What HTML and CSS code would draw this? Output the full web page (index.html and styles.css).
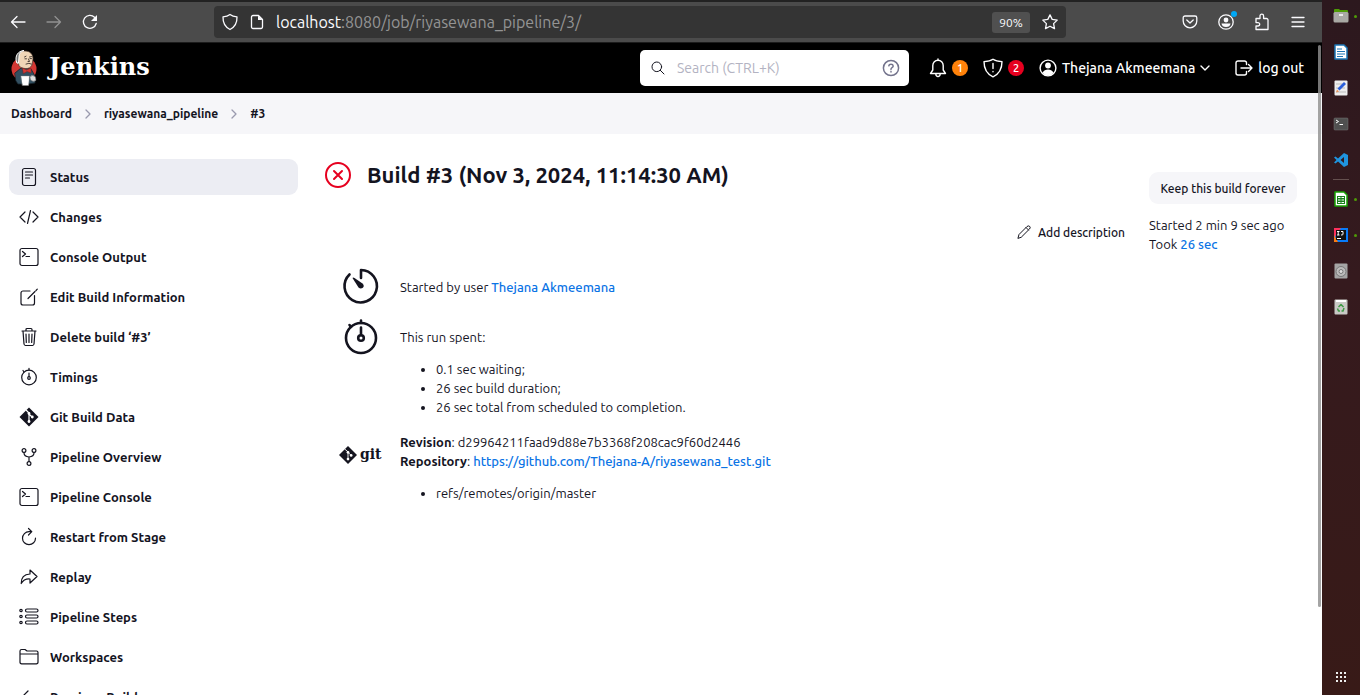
FILE: index.html
```html
<!DOCTYPE html>
<html lang="en">
<head>
<meta charset="utf-8">
<title>riyasewana_pipeline #3 [Jenkins]</title>
<link rel="stylesheet" href="styles.css">
</head>
<body>
<div class="desktop">
<div class="browser">
  <div class="toolbar">
    <div class="nav-buttons">
      <button class="tool" aria-label="Back"><svg width="16" height="16" viewBox="0 0 16 16"><path d="M15 8H1.500M7 2.500L1.500 8L7 13.500"/></svg></button>
      <button class="tool dim" aria-label="Forward"><svg width="16" height="16" viewBox="0 0 16 16"><path d="M1 8H14.500M9 2.500L14.500 8L9 13.500"/></svg></button>
      <button class="tool" aria-label="Reload"><svg width="16" height="16" viewBox="0 0 16 16"><path d="M14.200 9.500A6.500 6.500 0 1 1 12.500 3.200"/><path class="solid" d="M15 1v6H9z"/></svg></button>
    </div>
    <div class="urlbar">
      <svg class="tool-icon" width="16" height="18" viewBox="0 0 16 18"><path d="M8 1.500C10 3 12.500 3.600 15 3.800C15.200 9.500 13.500 13.800 8 16.500C2.500 13.800 .800 9.500 1 3.800C3.500 3.600 6 3 8 1.500Z"/></svg>
      <svg class="tool-icon" width="14" height="16" viewBox="0 0 14 16"><path d="M3 1.500H8.500L12.500 5.500V13A1.500 1.500 0 0 1 11 14.500H3A1.500 1.500 0 0 1 1.500 13V3A1.500 1.500 0 0 1 3 1.500Z"/><path class="solid" d="M8 1.500L12.500 6H8z"/></svg>
      <span class="url"><b>localhost</b>:8080/job/riyasewana_pipeline/3/</span>
      <button class="zoom">90%</button>
      <button class="tool" aria-label="Bookmark"><svg width="16" height="16" viewBox="0 0 16 16"><path d="M8 .900L10.200 5.400L15.200 6.100L11.600 9.600L12.500 14.600L8 12.200L3.500 14.600L4.400 9.600L.800 6.100L5.800 5.400Z"/></svg></button>
    </div>
    <div class="ext-buttons">
      <button class="tool" aria-label="Pocket"><svg width="16" height="16" viewBox="0 0 16 16"><path d="M3 2H13A1.800 1.800 0 0 1 14.800 3.800V7A6.800 6.800 0 0 1 1.200 7V3.800A1.800 1.800 0 0 1 3 2ZM4.800 6L8 9L11.200 6"/></svg></button>
      <button class="tool account" aria-label="Account"><svg width="16" height="16" viewBox="0 0 16 16"><circle cx="8" cy="8" r="7.200"/><circle class="solid" cx="8" cy="6" r="2.400"/><path class="solid" d="M3.500 9.500H12.500Q12 13 8 13Q4 13 3.500 9.500Z"/></svg></button>
      <button class="tool" aria-label="Extensions"><svg width="16" height="18" viewBox="0 0 16 18"><path d="M2 5.500H6V3A1.800 1.800 0 0 1 9.600 3V5.500H12.500A1.500 1.500 0 0 1 14 7V16.500H2V13H4A1.700 1.700 0 0 0 4 9.600H2Z"/></svg></button>
      <button class="tool" aria-label="Menu"><svg width="14" height="14" viewBox="0 0 14 14"><path d="M1 2.500H13M1 7H13M1 11.500H13"/></svg></button>
    </div>
  </div>

  <header class="page-header">
    <a class="brand" href="#">
      <svg width="28" height="38" viewBox="0 0 28 38"><ellipse cx="14" cy="20" rx="12.500" ry="12"/><path d="M5 24L11 19L21 20L25 27L25 34L18 35H8L6 32Z" fill="#335061" stroke="#17242d" stroke-width=".800"/><path d="M7 10C7 4 11 1.500 15 2C20 2 23 5 23 10L22 16Q20 20 15 19.500Q9 19 8.500 15Q6 14 7 10Z" fill="#f0d6b7" stroke="#4a3a30" stroke-width=".700"/><path d="M6.500 13C4.500 7 8 2 14 1.500C10 3 9 5 9 8L8.500 14Q6.500 15 6.500 13Z" fill="#727472"/><path d="M14.500 8L16 7.200M19.500 8L21.500 7.600M15 9.800H16.500M20 9.600H21.500M18.500 10L19.500 12.500H18M16 15Q19 13.500 21.500 15" fill="none" stroke="#3a302b" stroke-width=".900"/><path d="M12.500 19L16.500 21L21 19L21 24L17 22.500L13.500 24.500Z" fill="#d33833" stroke="#81201e" stroke-width=".500"/><path d="M11 27H19.500L18.500 36.500H12.500Z" fill="#fff" stroke="#888" stroke-width=".400"/><path d="M20 27.500Q23 25 25.500 28L26 31.500Q23 33.500 20.500 31Z" fill="#ddd" stroke="#555" stroke-width=".500"/></svg>
      <span>Jenkins</span>
    </a>
    <div class="search">
      <svg width="14" height="14" viewBox="0 0 14 14"><circle cx="5.800" cy="5.800" r="4.800"/><path d="M9.300 9.300L13 13"/></svg>
      <input type="text" aria-label="Search" placeholder="Search (CTRL+K)">
      <button aria-label="Search help"><svg width="18" height="18" viewBox="0 0 18 18"><circle cx="9" cy="9" r="7.600"/><path d="M6.800 6.800Q7 5.200 9 5.200T11.200 7Q11.200 8 10 8.700T9 10.500M9 12.600V13"/></svg></button>
    </div>
    <div class="header-links">
      <button class="alert" aria-label="1 notification"><svg width="18" height="20" viewBox="0 0 18 20"><path d="M1.500 15.500L3.800 12V7.500A5.200 5.200 0 0 1 14.200 7.500V12L16.500 15.500ZM6.800 16Q7 18.500 9 18.500T11.200 16M9 2V1"/></svg><span class="badge orange">1</span></button>
      <button class="alert" aria-label="2 security warnings"><svg width="20" height="20" viewBox="0 0 20 20"><path d="M10 1.200C12.500 3 15.500 3.500 19 3.600C19 11 16.500 16 10 18.800C3.500 16 1 11 1 3.600C4.500 3.500 7.500 3 10 1.200ZM10 5.500V10.500M10 13.500V13.800"/></svg><span class="badge red">2</span></button>
      <button class="header-link"><svg width="18" height="18" viewBox="0 0 18 18"><circle cx="9" cy="9" r="7.900"/><circle class="fill" cx="9" cy="6.500" r="2.900"/><path class="fill" d="M3.500 13.500Q5.500 10.500 9 10.500T14.500 13.500Q12.500 16.500 9 16.500T3.500 13.500Z"/></svg>Thejana Akmeemana<svg width="10" height="8" viewBox="0 0 10 8"><path d="M1 2L5 6L9 2"/></svg></button>
      <a class="header-link" href="#"><svg width="18" height="16" viewBox="0 0 18 16"><path d="M11.500 4.500V3A2 2 0 0 0 9.500 1H3A2 2 0 0 0 1 3V13A2 2 0 0 0 3 15H9.500A2 2 0 0 0 11.500 13V11.500M6 8H17M13.500 4.500L17 8L13.500 11.500"/></svg>log out</a>
    </div>
  </header>

  <nav class="breadcrumbs" aria-label="Breadcrumbs">
    <a href="#">Dashboard</a>
    <svg width="8" height="10" viewBox="0 0 8 10"><path d="M2 1L6 5L2 9"/></svg>
    <a href="#">riyasewana_pipeline</a>
    <svg width="8" height="10" viewBox="0 0 8 10"><path d="M2 1L6 5L2 9"/></svg>
    <a href="#">#3</a>
  </nav>

  <div class="page-body">
    <nav class="tasks" aria-label="Build tasks">
      <a class="task active" href="#"><svg viewBox="0 0 20 20"><rect x="3.500" y="1.500" width="13" height="17" rx="2"/><path d="M6.500 5H13.500M6.500 8H13.500M6.500 11H10.500"/></svg>Status</a>
      <a class="task" href="#"><svg viewBox="0 0 20 20"><path d="M6 5L1 10L6 15M14 5L19 10L14 15M11.500 3.500L8.500 16.500"/></svg>Changes</a>
      <a class="task" href="#"><svg viewBox="0 0 20 20"><rect x="1" y="1.500" width="18" height="17" rx="2"/><path d="M3.500 4.500L6.500 7L3.500 9.500M7 9.500H10.500"/></svg>Console Output</a>
      <a class="task" href="#"><svg viewBox="0 0 20 20"><path d="M11 4H4A2 2 0 0 0 2 6V16A2 2 0 0 0 4 18H13.500A2 2 0 0 0 15.500 16V8.500M9 11.500L16 4.500M17 3.500L18.300 2.200"/></svg>Edit Build Information</a>
      <a class="task" href="#"><svg viewBox="0 0 20 20"><path d="M4 4L5 17A1.800 1.800 0 0 0 6.500 18.500H13.500A1.800 1.800 0 0 0 15 17L16 4M3 4H17M7 4V2.500A1 1 0 0 1 8 1.500H12A1 1 0 0 1 13 2.500V4M10 7V15.500M7 7L7.300 15.500M13 7L12.700 15.500"/></svg>Delete build ‘#3’</a>
      <a class="task" href="#"><svg viewBox="0 0 20 20"><circle cx="10" cy="10.500" r="7.300"/><circle cx="10" cy="11" r="1.300"/><path d="M10 9.500V6M10 1.300V3M4 3.500L5 5"/></svg>Timings</a>
      <a class="task" href="#"><svg viewBox="0 0 20 20"><path class="ink" d="M10 .500L19.500 10L10 19.500L.500 10Z"/><path class="paper" d="M7.500 3.500L10 6V15M10 7L13 10"/><circle class="dot" cx="10" cy="6.500" r="1.400"/><circle class="dot" cx="10" cy="14.500" r="1.400"/><circle class="dot" cx="13.300" cy="10" r="1.400"/></svg>Git Build Data</a>
      <a class="task" href="#"><svg viewBox="0 0 20 20"><circle cx="5" cy="3.500" r="1.900"/><circle cx="15" cy="3.500" r="1.900"/><circle cx="10" cy="16.500" r="1.900"/><path d="M5 5.500V6Q5 9.500 10 10Q15 9.500 15 6V5.500M10 10V14.500"/></svg>Pipeline Overview</a>
      <a class="task" href="#"><svg viewBox="0 0 20 20"><rect x="1" y="1.500" width="18" height="17" rx="2"/><path d="M3.500 4.500L6.500 7L3.500 9.500M7 9.500H10.500"/></svg>Pipeline Console</a>
      <a class="task" href="#"><svg viewBox="0 0 20 20"><path d="M12.500 4.700H10A6.500 6.500 0 1 0 16.500 11.200M9.500 1.500L12.800 4.700L9.500 8"/></svg>Restart from Stage</a>
      <a class="task" href="#"><svg viewBox="0 0 20 20"><path d="M11 3L18 9.500L11 16V12Q5 11.500 2.200 16.500Q2 7.500 11 7Z"/></svg>Replay</a>
      <a class="task" href="#"><svg viewBox="0 0 20 20"><circle cx="2" cy="3.500" r="1.200"/><circle cx="2" cy="9.500" r="1.200"/><circle cx="2" cy="15.500" r="1.200"/><rect x="6.500" y="2" width="12.500" height="3" rx="1.500"/><rect x="6.500" y="8" width="12.500" height="3" rx="1.500"/><rect x="6.500" y="14" width="12.500" height="3" rx="1.500"/></svg>Pipeline Steps</a>
      <a class="task" href="#"><svg viewBox="0 0 20 20"><path d="M1 7V4A1.600 1.600 0 0 1 2.600 2.500H6L8 4H17.500A1.500 1.500 0 0 1 19 5.500V15A1.600 1.600 0 0 1 17.400 16.800H2.600A1.600 1.600 0 0 1 1 15V7H19"/></svg>Workspaces</a>
      <a class="task" href="#"><svg viewBox="0 0 20 20"><path d="M9 4L3 10L9 16M3 10H17"/></svg>Previous Build</a>
    </nav>

    <main class="build">
      <div class="build-head">
        <h1><svg width="28" height="28" viewBox="0 0 28 28"><circle cx="14" cy="14" r="12"/><path d="M10 10L18 18M18 10L10 18"/></svg>Build #3 (Nov 3, 2024, 11:14:30 AM)</h1>
        <button class="describe"><svg width="14" height="14" viewBox="0 0 14 14"><path d="M1 13L2 9.500L10 1.500Q11.500 .300 12.800 1.500Q13.800 2.600 12.500 4L4.500 12ZM9 2.500L11.500 5"/></svg>Add description</button>
        <div class="run-info">
          <button class="keep">Keep this build forever</button>
          <p>Started 2 min 9 sec ago<br>Took <a href="#">26 sec</a></p>
        </div>
      </div>

      <section class="detail">
        <svg class="big-icon" viewBox="0 0 40 40"><path d="M20 12V4A16.200 16.200 0 1 1 8.500 8.500"/><path class="ink" d="M11.500 12Q12 11 13.500 12L21.500 17.500Q24 20 21.500 22Q19.500 23 17.500 21.500Z"/></svg>
        <p class="cause">Started by user <a href="#">Thejana Akmeemana</a></p>
      </section>
      <section class="detail run-time">
        <svg class="big-icon" viewBox="0 0 40 40"><circle cx="20" cy="21" r="15"/><circle cx="20" cy="21" r="2.800"/><path d="M20 18V10.500M20 3.500V6M8.500 8L10 10"/></svg>
        <div class="spent">
          <p>This run spent:</p>
          <ul><li>0.1 sec waiting;</li><li>26 sec build duration;</li><li>26 sec total from scheduled to completion.</li></ul>
        </div>
      </section>
      <section class="detail revision">
        <div class="git-logo"><svg width="18" height="18" viewBox="0 0 20 20"><path class="ink" d="M10 0L20 10L10 20L0 10Z"/><path class="paper" d="M6.500 3.500L10 6.500V15M10 7L13 10"/><circle class="dot" cx="10" cy="7" r="1.500"/><circle class="dot" cx="10" cy="14.500" r="1.500"/><circle class="dot" cx="13.500" cy="10.500" r="1.500"/></svg><span>git</span></div>
        <div>
          <p><b>Revision</b>: d29964211faad9d88e7b3368f208cac9f60d2446<br><b>Repository</b>: <a href="#">https://github.com/Thejana-A/riyasewana_test.git</a></p>
          <ul><li>refs/remotes/origin/master</li></ul>
        </div>
      </section>
    </main>
  </div>
  <div class="scroll-thumb"></div>
</div>

<aside class="dock" aria-label="Dock">
  <button class="app running" aria-label="Files"><svg viewBox="0 0 16 16"><path d="M1 2Q1 1 2 1H6L7 2H14Q15 2 15 3V6H1Z" fill="#4e9a06"/><rect x=".500" y="4" width="15" height="10.500" rx="1.500" fill="#a9a9a4"/><path d="M6 7H10" stroke="#fff" stroke-width="1.500"/></svg></button>
  <button class="app" aria-label="Writer"><svg viewBox="0 0 16 16"><path d="M2 1H11L14 4V15H2Z" fill="#fff" stroke="#1b75b5" stroke-width="1.500"/><path d="M4 5H9M4 7.500H12M4 10H12M4 12.500H10" stroke="#1b75b5"/></svg></button>
  <button class="app" aria-label="Text editor"><svg viewBox="0 0 16 16"><rect x="1.500" y=".500" width="13" height="15" rx="1" fill="#eee"/><path d="M3 4H10M3 8H12M3 12H13" stroke="#bbb"/><path d="M5.500 9.500L12 3" stroke="#2b5fd9" stroke-width="2.800"/><path d="M3 12.500L4 9.500L6 11.500Z" fill="#e8935a"/></svg></button>
  <button class="app" aria-label="Terminal"><svg viewBox="0 0 16 16"><rect x="1" y="2" width="14" height="12" rx="1" fill="#505050" stroke="#777" stroke-width=".500"/><path d="M3 4L5.500 5.500L3 7M6.500 8.500H10" stroke="#fff" fill="none"/></svg></button>
  <button class="app" aria-label="Visual Studio Code"><svg viewBox="0 0 16 16"><path d="M11 1L15 3V13L11 15L5 9.500L2.500 11.500L1 10.500L3.500 8L1 5.500L2.500 4.500L5 6.500ZM11 5L7.500 8L11 11Z" fill="#1f94df" fill-rule="evenodd"/></svg></button>
  <hr>
  <button class="app running" aria-label="Calc"><svg viewBox="0 0 16 16"><path d="M2 1H11L14 4V15H2Z" fill="#fff" stroke="#18a303" stroke-width="1.500"/><rect x="4" y="5" width="8" height="8" fill="#18811a"/><path d="M5 6.500H7.500M8.500 6.500H11M5 9H7.500M8.500 9H11M5 11.500H7.500M8.500 11.500H11" stroke="#fff"/></svg></button>
  <button class="app running" aria-label="IntelliJ IDEA"><svg viewBox="0 0 16 16"><path d="M1 1H15V15H1Z" fill="#087cfa"/><path d="M1 1H8L1 11Z" fill="#fe315d"/><path d="M1 8L5 15H1Z" fill="#f97a12"/><rect x="3" y="3" width="10" height="10" fill="#111"/><path d="M4 4.500H6.500M5.200 4.500V8M4 8H6.500M8 4.500H10V7.500Q9.500 8 8 8M4 11.500H8" stroke="#fff" fill="none"/></svg></button>
  <button class="app" aria-label="Disks"><svg viewBox="0 0 16 16"><rect x="1.500" y=".500" width="13" height="15" rx="1" fill="#a5a5a5"/><circle cx="8" cy="8.500" r="5" fill="#bbb" stroke="#777"/><circle cx="8" cy="8.500" r="2" fill="#ddd" stroke="#777"/></svg></button>
  <button class="app" aria-label="Trash"><svg viewBox="0 0 16 16"><rect x="1.500" y=".500" width="13" height="15" rx="1" fill="#c9c9c5"/><path d="M3 2H13" stroke="#fff" stroke-width="2"/><path d="M5.500 8L8 5.500L10.500 8M11 9L10 12H8.500M7 12H5.500L4.500 9.500" fill="none" stroke="#3e9a45" stroke-width="1.500"/></svg></button>
  <button class="app apps" aria-label="Show applications"><svg viewBox="0 0 16 16"><path d="M3 4H5M7 4H9M11 4H13M3 8H5M7 8H9M11 8H13M3 12H5M7 12H9M11 12H13" stroke="#eee" stroke-width="2"/></svg></button>
</aside>
</div>
</body>
</html>
```
FILE: styles.css
```css
* { box-sizing: border-box; }
html, body { height: 100%; }
body {
  margin: 0;
  overflow: hidden;
  font-family: Ubuntu, "Noto Sans", sans-serif;
  font-size: 13px;
  line-height: 19px;
  color: #14141f;
  background: #fff;
}
a { color: #0b74e5; text-decoration: none; font-weight: 500; }
p, ul, h1 { margin: 0; }
button { padding: 0; border: 0; background: none; font: inherit; color: inherit; }
svg { flex: none; fill: none; stroke: currentColor; stroke-linecap: round; stroke-linejoin: round; }
svg .ink { fill: #14141f; stroke: none; }
svg .paper { fill: none; stroke: #fff; }
svg .dot { fill: #fff; stroke: none; }

.desktop { display: flex; height: 100%; }
.browser { position: relative; flex: 1; min-width: 0; display: flex; flex-direction: column; overflow: hidden; }

/* Browser toolbar */
.toolbar {
  flex: none;
  display: flex;
  align-items: center;
  height: 43px;
  padding: 0 16px 0 10px;
  border-top: 2px solid #222;
  border-bottom: 1px solid #1c1c1c;
  background: #4b4b4b;
  color: #fbfbfe;
}
.nav-buttons { display: flex; gap: 20px; flex: 0 1 204px; }
.tool { position: relative; display: grid; place-items: center; width: 16px; height: 18px; }
.tool svg, .tool-icon { stroke-width: 1.3; }
.tool .solid, .tool-icon .solid { fill: currentColor; stroke: none; }
.tool.dim { color: #919191; }
.urlbar {
  flex: 0 1 852px;
  display: flex;
  align-items: center;
  gap: 12px;
  height: 32px;
  padding: 0 8px;
  border-radius: 4px;
  background: #343434;
}
.url { flex: 1; font-size: 16px; color: #949494; }
.url b { font-weight: 400; color: #fbfbfe; }
.zoom { width: 38px; height: 21px; border-radius: 3px; background: #505050; font-size: 12px; }
.ext-buttons { display: flex; gap: 20px; margin-left: auto; }
.account::after {
  content: "";
  position: absolute;
  top: -2px;
  right: -3px;
  width: 6px;
  height: 6px;
  border-radius: 50%;
  background: #00a8f5;
}
.nav-buttons, .urlbar { min-width: 0; }

/* Jenkins header */
.page-header {
  flex: none;
  display: flex;
  align-items: center;
  height: 50px;
  padding: 0 18px 0 10px;
  background: #000;
  color: #fff;
}
.brand { display: flex; align-items: center; gap: 11px; color: #fff; font: bold 24px/32px Georgia, "DejaVu Serif", serif; }
.brand ellipse { fill: #d33833; stroke: none; }
.brand span { padding-bottom: 2px; }
.search {
  display: flex;
  align-items: center;
  width: 269px;
  height: 36px;
  margin-left: auto;
  padding: 0 9px 0 11px;
  border-radius: 5px;
  background: #fff;
  color: #14141f;
}
.search input {
  flex: 1;
  min-width: 0;
  margin: 0;
  padding: 0 0 0 12px;
  border: 0;
  outline: 0;
  background: none;
  font: 14px/20px Ubuntu, "Noto Sans", sans-serif;
}
.search input::placeholder { color: #b3b3c2; opacity: 1; }
.search button { display: flex; color: #73738c; }
.search button svg { stroke-width: 1.5; }
.header-links { display: flex; align-items: center; gap: 15px; margin-left: 20px; font-size: 14px; font-weight: 500; }
.alert, .header-link { display: flex; align-items: center; gap: 5px; color: #fff; white-space: nowrap; }
.alert svg, .header-link svg { stroke-width: 1.4; }
.header-link .fill { fill: #fff; stroke: none; }
.header-link + .header-link { margin-left: 10px; }
.badge { width: 16px; height: 16px; border-radius: 50%; font-size: 11px; line-height: 16px; text-align: center; }
.badge.orange { background: #ff820a; }
.badge.red { background: #e6001f; }

.breadcrumbs { flex: none; display: flex; align-items: center; gap: 12px; height: 41px; padding: 0 11px; background: #f6f6f9; color: #9a9aae; font-size: 12px; }
.breadcrumbs a { color: #14141f; font-weight: 600; }
.breadcrumbs svg { stroke-width: 1.3; }

/* Page body */
.page-body { flex: 1; min-height: 0; display: flex; gap: 26px; padding: 25px 25px 0 9px; overflow: hidden; }
.tasks { flex: none; width: 289px; display: flex; flex-direction: column; gap: 4px; }
.task { flex: none; display: flex; align-items: center; gap: 11px; height: 36px; padding: 0 10px; border-radius: 9px; color: #14141f; font-weight: 600; }
.task svg { width: 20px; height: 20px; stroke-width: 1.2; }
.task.active { background: #ecedf3; }

.build { flex: 1; min-width: 0; }
.build-head { display: flex; align-items: flex-end; gap: 24px; }
h1 { align-self: flex-start; flex: 1; display: flex; align-items: center; gap: 15px; font-size: 22px; line-height: 32px; font-weight: 700; }
h1 svg { color: #e6001f; stroke-width: 2; }
.describe { display: flex; align-items: center; gap: 7px; height: 44px; font-size: 12px; font-weight: 500; }
.describe svg { stroke-width: 1; }
.run-info { display: flex; flex-direction: column; align-items: flex-start; gap: 12px; padding-top: 13px; }
.run-info p { width: 148px; }
.keep { width: 148px; height: 32px; border-radius: 9px; background: #f6f6f9; font-size: 12px; font-weight: 500; }

.detail { display: flex; gap: 19px; padding: 12px 0 0 17px; }
.detail.run-time { padding-top: 11px; }
.big-icon { width: 40px; height: 40px; stroke-width: 2.6; }
.cause { padding-top: 12px; }
.spent { padding-top: 11px; }
.detail ul { margin-top: 13px; padding-left: 36px; }
.detail.revision { padding-top: 16px; padding-left: 15px; gap: 17px; }
.git-logo { display: flex; align-items: center; gap: 3px; width: 44px; height: 44px; font: bold 14px/20px "DejaVu Serif", serif; }
.git-logo span { padding-bottom: 3px; }

/* Scroll thumb drawn over the page edge */
.scroll-thumb { position: absolute; top: 45px; right: 1px; bottom: 88px; width: 3px; border-radius: 2px; background: #8f8f8fd0; }

/* Desktop dock */
.dock {
  flex: none;
  width: 38px;
  display: flex;
  flex-direction: column;
  align-items: center;
  gap: 20px;
  padding: 8px 0 10px;
  background: linear-gradient(#2c181e, #351a1e 40%, #381a17);
}
.app { position: relative; display: flex; width: 16px; height: 16px; }
.app svg { width: 16px; height: 16px; stroke: none; stroke-linecap: butt; }
.running::after {
  content: "";
  position: absolute;
  top: 7px;
  right: -8px;
  width: 3px;
  height: 3px;
  border-radius: 50%;
  background: #4e9a06;
}
.dock hr { width: 16px; margin: -9px 0; border: 0; border-top: 1px solid #65504f; }
.apps { margin-top: auto; }
```
